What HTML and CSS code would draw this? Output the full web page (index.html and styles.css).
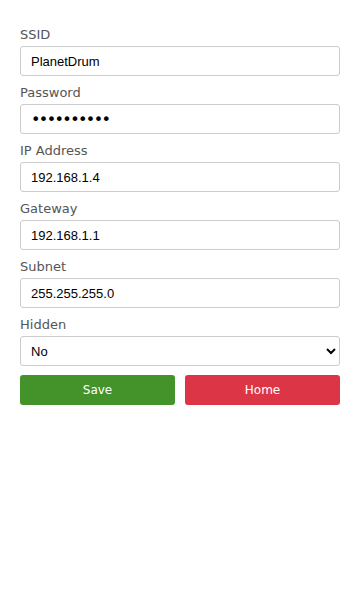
FILE: index.html
```html
<!DOCTYPE html>
<html lang="en">
<head>
  <meta charset="UTF-8" />
  <meta name="viewport" content="width=device-width, initial-scale=1.0"/>
  <title>WiFi Settings</title>
  <link rel="stylesheet" href="styles.css">
</head>
<body>
  <form class="settings" onsubmit="return false">
    <label class="field">
      <span class="field-label">SSID</span>
      <input type="text" class="field-input" value="PlanetDrum">
    </label>
    <label class="field">
      <span class="field-label">Password</span>
      <input type="password" class="field-input field-secret" value="planetdrum">
    </label>
    <label class="field">
      <span class="field-label">IP Address</span>
      <input type="text" class="field-input" value="192.168.1.4">
    </label>
    <label class="field">
      <span class="field-label">Gateway</span>
      <input type="text" class="field-input" value="192.168.1.1">
    </label>
    <label class="field">
      <span class="field-label">Subnet</span>
      <input type="text" class="field-input" value="255.255.255.0">
    </label>
    <label class="field">
      <span class="field-label">Hidden</span>
      <select class="field-input">
        <option selected>No</option>
        <option>Yes</option>
      </select>
    </label>
    <div class="actions">
      <button type="submit" class="btn btn-save">Save</button>
      <button type="button" class="btn btn-home">Home</button>
    </div>
  </form>
</body>
</html>
```

FILE: styles.css
```css
body {
  margin: 0;
  background: #fff;
  font-family: 'DejaVu Sans', sans-serif;
  color: #555;
}

.settings {
  display: flex;
  flex-direction: column;
  padding: 24px 20px;
}

.field {
  display: flex;
  flex-direction: column;
  margin-bottom: 6px;
}

.field-label {
  font-size: 13px;
  line-height: 22px;
}

.field-input {
  box-sizing: border-box;
  width: 100%;
  height: 30px;
  padding: 0 10px;
  border: 1px solid #ccc;
  border-radius: 3px;
  background: #fff;
  color: #000;
  font-family: 'Liberation Sans', Arial, sans-serif;
  font-size: 13px;
}

.field-secret {
  font-family: 'DejaVu Sans', sans-serif;
  font-size: 16px;
  letter-spacing: -1.6px;
}

select.field-input {
  padding: 0 6px;
}

.actions {
  display: flex;
  gap: 10px;
  margin-top: 3px;
}

.btn {
  flex: 1;
  height: 30px;
  border: none;
  border-radius: 3px;
  color: #fff;
  font-family: 'DejaVu Sans', sans-serif;
  font-size: 12px;
  cursor: pointer;
}

.btn-save {
  background: #43922a;
}

.btn-home {
  background: #dc3545;
}
```
